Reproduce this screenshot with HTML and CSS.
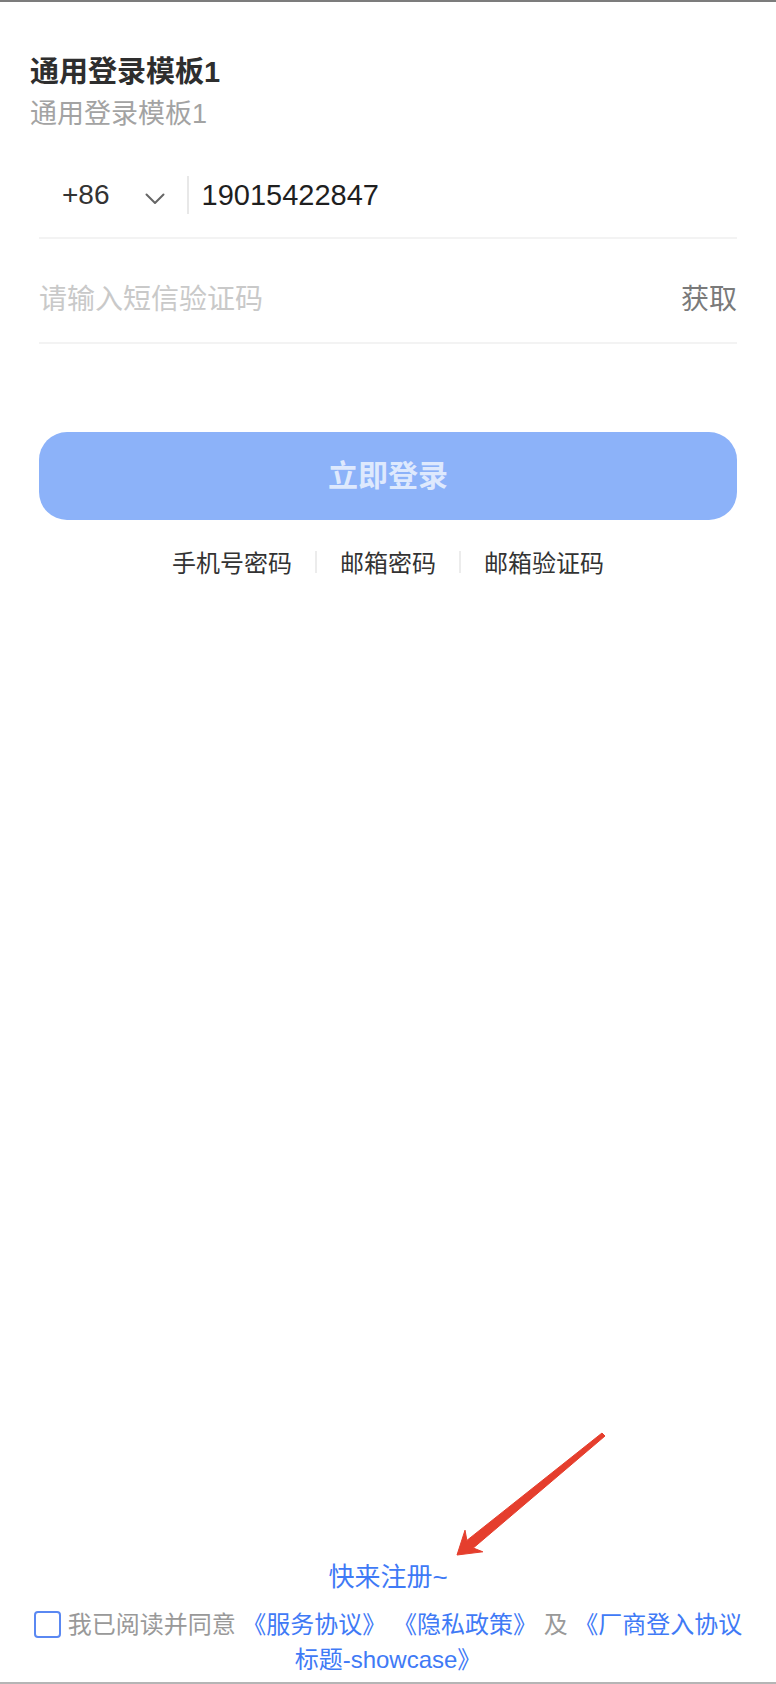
FILE: index.html
```html
<!DOCTYPE html>
<html lang="zh-CN">
<head>
<meta charset="utf-8">
<title>通用登录模板1</title>
<link rel="stylesheet" href="styles.css">
</head>
<body>
<div class="page">
  <header class="head">
    <h1 class="title">通用登录模板1</h1>
    <p class="subtitle">通用登录模板1</p>
  </header>

  <div class="form">
    <div class="field phone">
      <div class="cc">
        <span class="cc-num">+86</span>
        <svg class="chev" width="20" height="12" viewBox="0 0 20 12"><path d="M1.5 1.5 L10 10 L18.5 1.5" fill="none" stroke="#666" stroke-width="2" stroke-linecap="round" stroke-linejoin="round"/></svg>
      </div>
      <span class="sep"></span>
      <span class="value">19015422847</span>
    </div>

    <div class="field code">
      <span class="placeholder">请输入短信验证码</span>
      <span class="get">获取</span>
    </div>

    <button class="login" type="button">立即登录</button>

    <nav class="alt">
      <span class="alt-item">手机号密码</span>
      <span class="alt-sep"></span>
      <span class="alt-item">邮箱密码</span>
      <span class="alt-sep"></span>
      <span class="alt-item">邮箱验证码</span>
    </nav>
  </div>

  <footer class="foot">
    <div class="register">快来注册~</div>
    <p class="agree"><span class="box"></span>我已阅读并同意 <span class="link">《服务协议》</span> <span class="link">《隐私政策》</span> 及 <span class="link">《厂商登入协议</span><span class="link">标题-showcase》</span></p>
  </footer>

  <svg class="arrow" width="776" height="1684" viewBox="0 0 776 1684">
    <path d="M602 1433 L605 1436 L473.3 1548 L482.8 1551.8 L457 1555 L465 1530.2 L466.9 1540.4 Z" fill="#e53e2d" stroke="#e53e2d" stroke-width="1" stroke-linejoin="round"/>
  </svg>
</div>
</body>
</html>
```

FILE: styles.css
```css
* { box-sizing: border-box; }

html, body {
  margin: 0;
  padding: 0;
  background: #ffffff;
}

body {
  font-family: "Liberation Sans", "Noto Sans CJK SC", sans-serif;
  color: #333;
}

.page {
  position: relative;
  width: 776px;
  height: 1684px;
  border-top: 2px solid #7c7c7c;
  border-bottom: 2px solid #b5b5b5;
  display: flex;
  flex-direction: column;
  overflow: hidden;
}

.head {
  padding: 50px 30px 0;
}

.title {
  margin: 0;
  font-size: 29px;
  line-height: 40px;
  font-weight: 700;
  color: #2e2e2e;
}

.subtitle {
  margin: 4px 0 0;
  font-size: 27px;
  line-height: 36px;
  color: #a3a3a3;
}

.form {
  padding: 0 39px;
}

.field {
  display: flex;
  align-items: center;
  height: 86px;
  border-bottom: 2px solid #f3f3f3;
}

.phone {
  margin-top: 21px;
}

.cc {
  display: flex;
  align-items: center;
  padding-left: 23px;
}

.cc-num {
  font-size: 28px;
  line-height: 36px;
  color: #333;
}

.chev {
  display: block;
  margin-left: 35px;
  margin-top: 8px;
}

.sep {
  width: 2px;
  height: 38px;
  background: #e8e8e8;
  margin-left: 22px;
  margin-right: 13px;
}

.value {
  font-size: 29px;
  line-height: 36px;
  color: #1f1f1f;
}

.code {
  margin-top: 19px;
  justify-content: space-between;
}

.placeholder {
  font-size: 28px;
  line-height: 36px;
  color: #c9c9c9;
}

.get {
  font-size: 28px;
  line-height: 36px;
  color: #7a7a7a;
}

.login {
  display: block;
  width: 100%;
  height: 88px;
  margin-top: 88px;
  border: 0;
  border-radius: 28px;
  background: #8cb2f9;
  color: rgba(255, 255, 255, 0.72);
  font-family: "Liberation Sans", "Noto Sans CJK SC", sans-serif;
  font-size: 30px;
  font-weight: 700;
  line-height: 40px;
  padding: 0;
}

.alt {
  display: flex;
  justify-content: center;
  align-items: center;
  margin-top: 29px;
}

.alt-item {
  font-size: 24px;
  line-height: 30px;
  color: #333;
}

.alt-sep {
  width: 2px;
  height: 22px;
  background: #ececec;
  margin: -4px 23px 0;
}

.foot {
  margin-top: auto;
  padding: 0 28px 5px;
  text-align: center;
}

.register {
  font-size: 26px;
  line-height: 32px;
  color: #3f7af6;
  margin-bottom: 14px;
}

.agree {
  margin: 0;
  font-size: 24px;
  line-height: 35px;
  color: #999;
}

.box {
  display: inline-block;
  width: 27px;
  height: 27px;
  border: 2px solid #5a88f2;
  border-radius: 4px;
  vertical-align: -5px;
  margin-right: 7px;
}

.link {
  color: #3f7af6;
}

.arrow {
  position: absolute;
  left: 0;
  top: -2px;
  pointer-events: none;
}
```
